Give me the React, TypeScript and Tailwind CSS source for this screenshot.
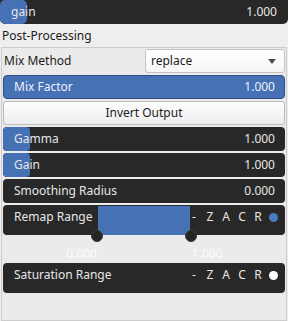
import React from "react";

const font = { fontFamily: '"Noto Sans", "Open Sans", sans-serif' };

const SliderRow = ({
  label,
  value,
  fill,
}: {
  label: string;
  value: string;
  fill?: string;
}) => (
  <div className="relative h-6 rounded-[4px] bg-[#282828] overflow-hidden">
    {fill && (
      <div className={`absolute left-0 top-0 h-full rounded-[4px] bg-[#4671b5] ${fill}`} />
    )}
    <div className="relative flex h-full items-center justify-between pl-[11px] pr-[10px] text-[#e6e6e6]">
      <span>{label}</span>
      <span>{value}</span>
    </div>
  </div>
);

const Flags = ({ dot }: { dot: string }) => (
  <div className="flex items-center text-[#e6e6e6]">
    <span className="w-4 text-center">-</span>
    <span className="w-4 text-center">Z</span>
    <span className="w-4 text-center">A</span>
    <span className="w-4 text-center">C</span>
    <span className="w-4 text-center">R</span>
    <span className={`ml-[3px] h-[9px] w-[9px] rounded-full ${dot}`} />
  </div>
);

const App = () => {
  return (
    <div
      className="flex h-[321px] w-[288px] flex-col bg-[#eeeeee] text-[12px] leading-none text-[#1b1b1b]"
      style={font}
    >
      <div className="relative h-6 shrink-0 overflow-hidden rounded-b-[5px] bg-[#282828]">
        <div className="absolute left-0 top-0 h-full w-[27px] rounded-[5px] bg-[#4671b5]" />
        <div className="relative flex h-full items-center justify-between pl-[11px] pr-[11px] text-[#e6e6e6]">
          <span>gain</span>
          <span>1.000</span>
        </div>
      </div>

      <div className="flex h-[23px] shrink-0 items-center px-[2px]">Post-Processing</div>

      <div className="ml-[1px] flex w-[286px] flex-1 flex-col gap-[2px] border border-[#cdcdcd] bg-[#ebebeb] px-[1px] pt-[1px]">
        <div className="flex h-6 items-center">
          <span className="flex-1 pl-[1px]">Mix Method</span>
          <div className="flex h-6 w-[140px] items-center justify-between rounded-[3px] border border-[#c2c2c2] bg-gradient-to-b from-[#ffffff] to-[#f6f6f6] pl-[5px] pr-[8px]">
            <span>replace</span>
            <svg width="8" height="5" viewBox="0 0 8 5">
              <path d="M0 0 L8 0 L4 5 Z" fill="#505050" />
            </svg>
          </div>
        </div>

        <div className="flex h-6 items-center justify-between rounded-[4px] border border-[#2f4f80] bg-[#4671b5] pl-[10px] pr-[9px] text-[#eef2fa]">
          <span>Mix Factor</span>
          <span>1.000</span>
        </div>

        <div className="flex h-6 items-center justify-center rounded-[3px] border border-[#bcbcbc] bg-gradient-to-b from-[#fdfdfd] to-[#ededed]">
          Invert Output
        </div>

        <SliderRow label="Gamma" value="1.000" fill="w-[27px]" />
        <SliderRow label="Gain" value="1.000" fill="w-[27px]" />
        <SliderRow label="Smoothing Radius" value="0.000" />

        <div className="relative h-[30px] rounded-[4px] bg-[#282828]">
          <div className="absolute bottom-0 left-[95px] top-[1px] w-[92px] bg-[#4671b5]" />
          <div className="relative flex h-6 items-center justify-between pl-[11px] pr-[7px] text-[#e6e6e6]">
            <span>Remap Range</span>
            <Flags dot="bg-[#4a7bc4]" />
          </div>
          <div className="absolute left-[88px] top-[25px] h-3 w-3 rounded-full border border-[#3a3a3a] bg-[#252525]" />
          <div className="absolute left-[182px] top-[25px] h-3 w-3 rounded-full border border-[#3a3a3a] bg-[#252525]" />
        </div>

        <div className="flex h-6 items-end pb-[1px] text-[#fbfbfb]">
          <span className="w-[94px] text-right">0.000</span>
          <span className="pl-[95px]">1.000</span>
        </div>

        <div className="h-[30px] rounded-[4px] bg-[#282828]">
          <div className="flex h-6 items-center justify-between pl-[11px] pr-[7px] text-[#e6e6e6]">
            <span>Saturation Range</span>
            <Flags dot="bg-[#ffffff]" />
          </div>
        </div>
      </div>
    </div>
  );
};

export default App;
